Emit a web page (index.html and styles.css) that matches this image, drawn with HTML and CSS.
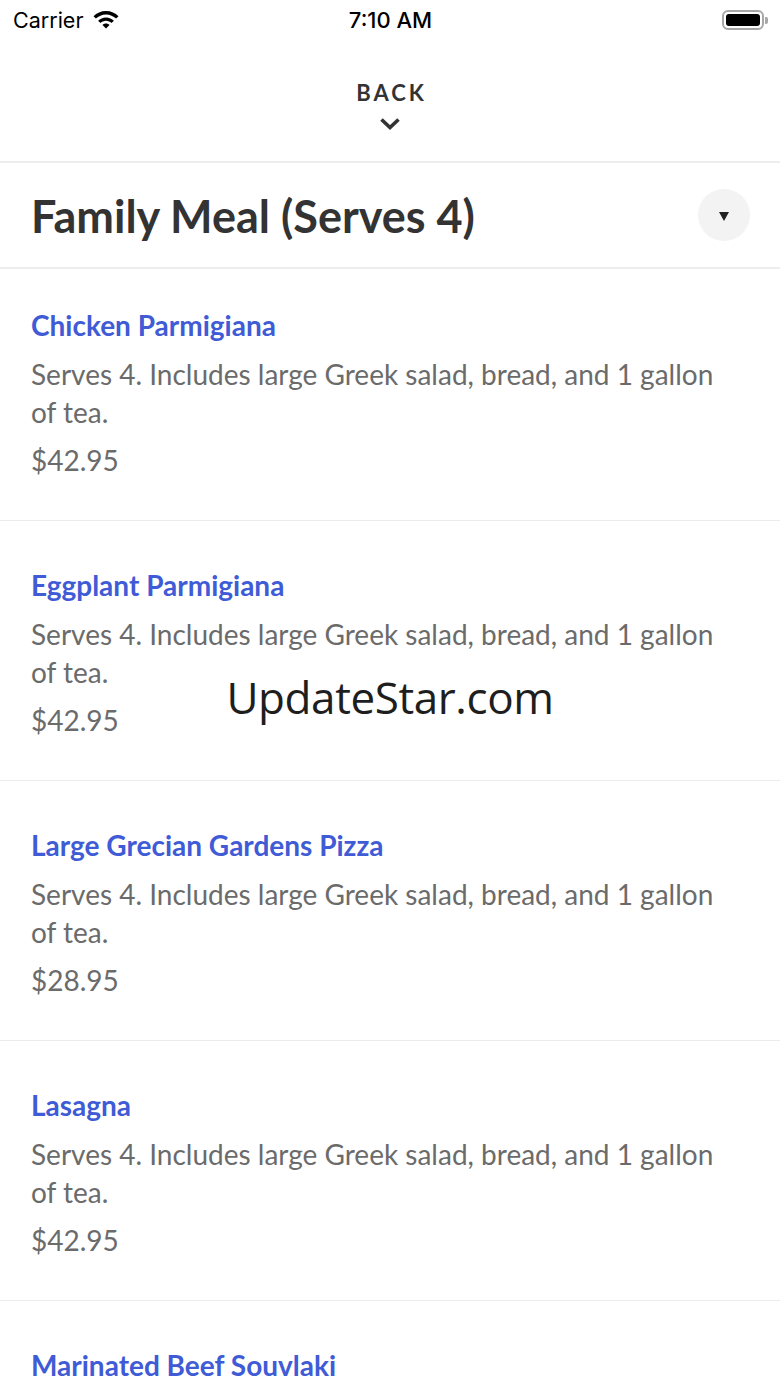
FILE: index.html
```html
<!DOCTYPE html>
<html lang="en">
<head>
<meta charset="utf-8">
<title>Family Meal</title>
<link rel="stylesheet" href="styles.css">
</head>
<body>
<div class="screen">
  <div class="status">
    <div class="status-left">
      <span class="carrier">Carrier</span>
      <svg class="wifi" width="28" height="20" viewBox="0 0 28 20">
        <path d="M14 2C9 2 4.6 4 1.5 7.2l2.4 2.4C6.5 7 10.1 5.4 14 5.4s7.5 1.6 10.1 4.2l2.4-2.4C23.4 4 19 2 14 2z" fill="#000"/>
        <path d="M14 8.4c-3.1 0-5.9 1.3-7.9 3.3l2.4 2.4c1.4-1.4 3.4-2.3 5.5-2.3s4.1.9 5.5 2.3l2.4-2.4c-2-2-4.8-3.3-7.9-3.3z" fill="#000"/>
        <path d="M14 14.6c-1.4 0-2.6.6-3.5 1.4L14 19.5l3.5-3.5c-.9-.8-2.1-1.4-3.5-1.4z" fill="#000"/>
      </svg>
    </div>
    <div class="time">7:10 AM</div>
    <div class="status-right">
      <div class="battery"><div class="battery-fill"></div></div>
      <div class="battery-nub"></div>
    </div>
  </div>

  <div class="back">
    <span class="back-label">BACK</span>
    <svg class="chev" width="22" height="14" viewBox="0 0 22 14">
      <path d="M2.5 2.5 L11 10.5 L19.5 2.5" fill="none" stroke="#333" stroke-width="3.6" stroke-linejoin="miter"/>
    </svg>
  </div>

  <div class="header">
    <h1 class="title">Family Meal (Serves 4)</h1>
    <div class="toggle"><span class="tri"></span></div>
  </div>

  <div class="list">
    <div class="item first">
      <div class="item-name">Chicken Parmigiana</div>
      <div class="item-desc">Serves 4. Includes large Greek salad, bread, and 1 gallon of tea.</div>
      <div class="item-price">$42.95</div>
    </div>
    <div class="item">
      <div class="item-name">Eggplant Parmigiana</div>
      <div class="item-desc">Serves 4. Includes large Greek salad, bread, and 1 gallon of tea.</div>
      <div class="item-price">$42.95</div>
    </div>
    <div class="item">
      <div class="item-name">Large Grecian Gardens Pizza</div>
      <div class="item-desc">Serves 4. Includes large Greek salad, bread, and 1 gallon of tea.</div>
      <div class="item-price">$28.95</div>
    </div>
    <div class="item">
      <div class="item-name">Lasagna</div>
      <div class="item-desc">Serves 4. Includes large Greek salad, bread, and 1 gallon of tea.</div>
      <div class="item-price">$42.95</div>
    </div>
    <div class="item">
      <div class="item-name">Marinated Beef Souvlaki</div>
      <div class="item-desc">Serves 4. Includes large Greek salad, bread, and 1 gallon of tea.</div>
      <div class="item-price">$42.95</div>
    </div>
  </div>

  <div class="watermark">UpdateStar.com</div>
</div>
</body>
</html>
```

FILE: styles.css
```css
* { box-sizing: border-box; }
html, body { margin: 0; padding: 0; background: #fff; }
body { font-family: Lato, "Open Sans", sans-serif; }

.screen {
  position: relative;
  width: 780px;
  height: 1387px;
  overflow: hidden;
  background: #fff;
}

.status {
  height: 40px;
  display: flex;
  align-items: center;
  justify-content: space-between;
  padding: 0 12px 0 13px;
  font-family: Inter, Roboto, sans-serif;
  color: #000;
}
.status-left { display: flex; align-items: center; gap: 9px; width: 160px; }
.carrier { font-size: 21.5px; font-weight: 400; }
.wifi { display: block; margin-top: -2px; }
.time { font-size: 22px; font-weight: 500; }
.status-right { display: flex; align-items: center; justify-content: flex-end; width: 160px; gap: 1px; }
.battery {
  width: 42px; height: 20px;
  border: 2px solid #a7a7a7;
  border-radius: 6px;
  padding: 2px;
}
.battery-fill { width: 100%; height: 100%; background: #000; border-radius: 3px; }
.battery-nub { width: 3px; height: 7px; background: #a7a7a7; border-radius: 0 2px 2px 0; }

.back {
  height: 123px;
  display: flex;
  flex-direction: column;
  align-items: center;
  padding-top: 40px;
  border-bottom: 2px solid #ededed;
}
.back-label {
  font-size: 22px;
  font-weight: 700;
  letter-spacing: 3px;
  margin-right: -3px;
  color: #333;
  line-height: 26px;
}
.chev { display: block; margin-top: 11px; }

.header {
  height: 106px;
  display: flex;
  align-items: center;
  justify-content: space-between;
  padding: 0 31px 0 31px;
  border-bottom: 2px solid #ededed;
}
.title {
  margin: 0;
  font-size: 45px;
  font-weight: 700;
  color: #333;
  line-height: 52px;
  margin-top: 2px;
}
.toggle {
  width: 52px; height: 52px;
  border-radius: 50%;
  background: #f3f3f3;
  display: flex;
  align-items: center;
  justify-content: center;
  margin-right: -1px;
}
.tri {
  width: 0; height: 0;
  border-left: 5px solid transparent;
  border-right: 5px solid transparent;
  border-top: 9px solid #222;
  margin-top: 2px;
}

.item {
  padding: 47px 49px 41px 31px;
  border-bottom: 1px solid #ececec;
}
.item.first { padding-top: 39px; }
.item-name {
  font-size: 28px;
  font-weight: 700;
  color: #3f5bd6;
  line-height: 34px;
}
.item-desc {
  margin-top: 13px;
  font-size: 28px;
  color: #6b6b6b;
  line-height: 38px;
}
.item-price {
  margin-top: 10px;
  font-size: 28px;
  color: #6b6b6b;
  line-height: 38px;
}

.watermark {
  position: absolute;
  left: 0; right: 0;
  top: 667px;
  text-align: center;
  font-family: "Open Sans", sans-serif;
  font-size: 44px;
  letter-spacing: -0.4px;
  color: #1e1e1e;
  line-height: 60px;
}
```
